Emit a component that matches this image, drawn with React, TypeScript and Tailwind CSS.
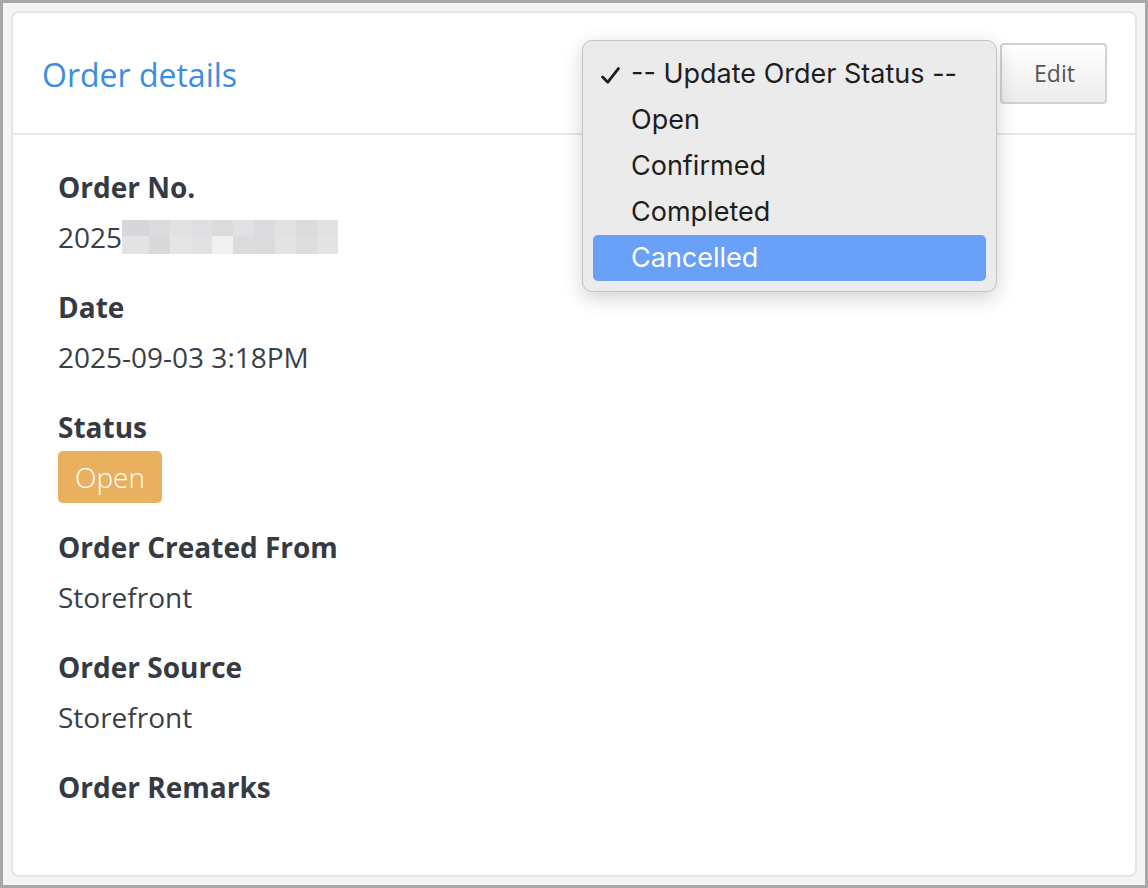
import React from "react"

const blurTop = [
  "bg-[#d7d7d9]",
  "bg-[#dcdcde]",
  "bg-[#e1e1e3]",
  "bg-[#dfdfe1]",
  "bg-[#dbdbdd]",
  "bg-[#e1e1e3]",
  "bg-[#dcdcde]",
  "bg-[#e1e1e3]",
  "bg-[#dbdbdd]",
  "bg-[#e2e2e3]",
]
const blurBottom = [
  "bg-[#e3e3e5]",
  "bg-[#d9d9db]",
  "bg-[#e5e5e5]",
  "bg-[#e2e2e4]",
  "bg-[#f0f1f0]",
  "bg-[#dcdcde]",
  "bg-[#dbdbdd]",
  "bg-[#e3e3e3]",
  "bg-[#dddddf]",
  "bg-[#e4e4e4]",
]

// モザイク部分
const Blurred = () => (
  <div className="flex flex-col">
    {[blurTop, blurBottom].map((row, r) => (
      <div key={r} className={r === 0 ? "flex h-[16px]" : "flex h-[18px]"}>
        {row.map((c, i) => (
          <div key={i} className={`${c} ${i === 0 ? "w-[27px]" : "w-[21px]"}`} />
        ))}
      </div>
    ))}
  </div>
)

const Field = (props: { label: string; children?: React.ReactNode; first?: boolean }) => {
  const { label, children, first } = props
  return (
    <div className={first ? "" : "mt-[34px]"}>
      <div className="text-[28px] font-bold leading-[36px] text-[#363a43]">{label}</div>
      {children !== undefined && (
        <div className="mt-[14px] flex h-[36px] items-center text-[28px] leading-[36px] text-[#3a3e47]">
          {children}
        </div>
      )}
    </div>
  )
}

const options = ["Open", "Confirmed", "Completed", "Cancelled"]

const App = () => {
  return (
    <div
      className="relative h-[888px] w-[1148px] border-[3px] border-[#a8a8a8] bg-[#f5f5f5] p-2"
      style={{ fontFamily: '"Open Sans", sans-serif' }}
    >
      <div className="flex h-full flex-col rounded-[8px] border-2 border-[#e6e6e6] bg-white">
        {/* ヘッダー */}
        <div className="flex h-[122px] items-center justify-between border-b-2 border-[#e8e8e8] pl-[29px] pr-[28px]">
          <div className="pt-1 text-[32px] leading-[40px] text-[#3b8ddd]">Order details</div>
          <div className="flex h-[61px] w-[107px] items-center justify-center rounded-[4px] border-2 border-[#d2d2d2] bg-gradient-to-b from-white to-[#ececec] pl-[2px] text-[23px] text-[#555]">
            Edit
          </div>
        </div>
        {/* 詳細 */}
        <div className="pl-[45px] pt-[34px]">
          <Field label="Order No." first>
            <span>2025</span>
            <Blurred />
          </Field>
          <Field label="Date">2025-09-03 3:18PM</Field>
          <Field label="Status">
            <span className="flex h-[52px] items-center rounded-[5px] bg-[#e8b05f] px-[17px] font-light text-white">
              Open
            </span>
          </Field>
          <Field label="Order Created From">Storefront</Field>
          <Field label="Order Source">Storefront</Field>
          <Field label="Order Remarks" />
        </div>
      </div>

      {/* ネイティブのセレクトメニュー */}
      <div
        className="absolute left-[579px] top-[37px] w-[415px] rounded-[10px] border border-[#c4c4c4] bg-[#ebebeb] px-[10px] py-[10px] shadow-[0_6px_20px_rgba(0,0,0,0.18)]"
        style={{ fontFamily: "Inter, 'Liberation Sans', sans-serif" }}
      >
        <div className="relative flex h-[46px] items-center pl-[38px] text-[27px] text-[#1e1e1e]">
          <svg
            className="absolute left-[8px] top-[16px]"
            width="19"
            height="17"
            viewBox="0 0 19 17"
            fill="none"
            stroke="#1e1e1e"
            strokeWidth="2.8"
            strokeLinecap="round"
            strokeLinejoin="round"
          >
            <path d="M1.6 10 L6.8 15.2 L17.4 1.6" />
          </svg>
          -- Update Order Status --
        </div>
        {options.map((o) => (
          <div
            key={o}
            className={
              o === "Cancelled"
                ? "flex h-[46px] items-center rounded-[5px] bg-[#69a0f8] pl-[38px] text-[27px] text-white"
                : "flex h-[46px] items-center pl-[38px] text-[27px] text-[#1e1e1e]"
            }
          >
            {o}
          </div>
        ))}
      </div>
    </div>
  )
}

export default App
